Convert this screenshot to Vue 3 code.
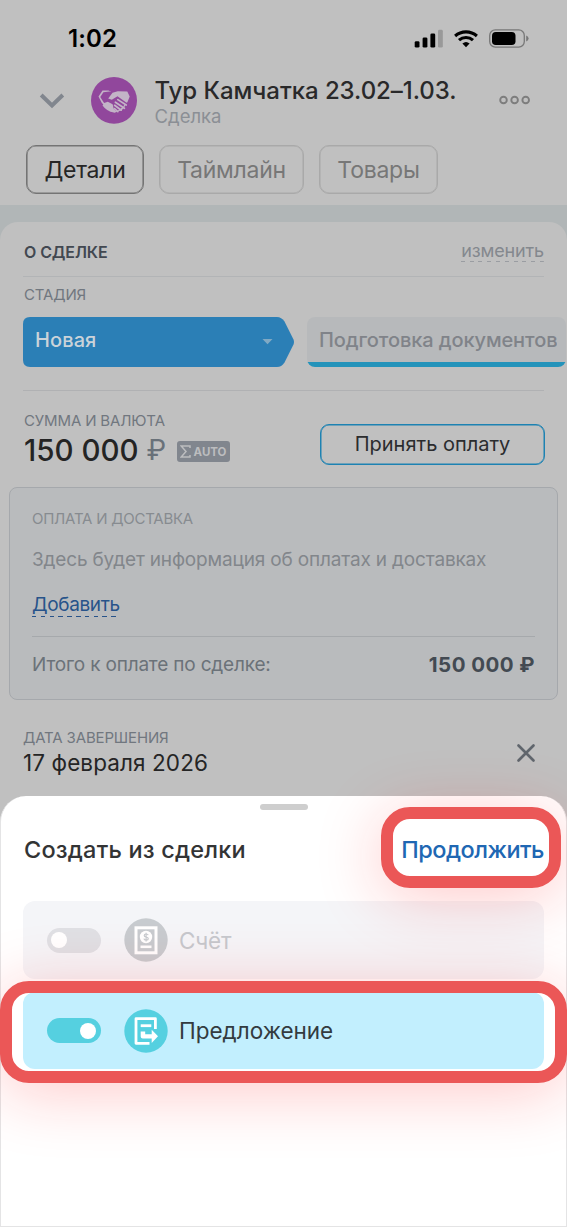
<script setup>
const tabs = [
  { label: 'Детали', cls: 'tab-details active' },
  { label: 'Таймлайн', cls: 'tab-timeline' },
  { label: 'Товары', cls: 'tab-products' },
]
</script>

<template>
  <div class="screen">
    <header class="top">
      <div class="status">
        <span class="clock">1:02</span>
        <svg class="status-icons" width="116" height="22" viewBox="0 0 116 22">
          <rect x="0.7" y="13.2" width="4.8" height="6.4" rx="1.4" />
          <rect x="8.6" y="9.4" width="4.8" height="10.2" rx="1.4" />
          <rect x="16.4" y="5.4" width="4.8" height="14.2" rx="1.4" />
          <rect x="24" y="1.8" width="4.8" height="17.8" rx="1.4" fill="#999" />
          <g fill="none" stroke="#000" stroke-width="3.1">
            <path d="M41.1 8A16.5 16.5 0 0 1 62.9 8" />
            <path d="M45 12.2A10.5 10.5 0 0 1 59 12.2" />
          </g>
          <path d="M48.4 15.6A5.5 5.5 0 0 1 55.6 15.6L52 19.2Z" />
          <rect x="75.7" y="1.8" width="34.6" height="17.4" rx="5.6" fill="none" stroke="#777" stroke-width="1.3" />
          <rect x="78" y="4" width="23.5" height="13" rx="3.8" />
          <path d="M112.2 7.6Q114.6 8.6 114.6 10.5T112.2 13.4Z" fill="#777" />
        </svg>
      </div>
      <div class="deal-head">
        <svg class="chevron" width="26" height="18" viewBox="0 0 26 18"><path d="M2.2 3L13 13.4L23.8 3" fill="none" stroke="#81868e" stroke-width="4" /></svg>
        <svg class="avatar" width="46" height="47" viewBox="0 0 46 47">
          <ellipse cx="23" cy="23.4" rx="23" ry="23.4" fill="#91479c" />
          <path d="M7.5 19.5L11.5 13.5L17.5 13.4L20 14.8L15 22L17.5 24.7L23.4 20.4L34.4 28.6L31 33L23.5 35.8L19 34.6L10.7 25.8Z" fill="#c3b4c7" />
          <path d="M12.4 15.2L9.3 20L13.1 26L16.8 24.8L21.6 27.2L22.8 32L25.5 34.5L32.5 29.5L34.5 24.8L27 16L18.5 14.5Z" fill="#91479c" />
          <path d="M17.2 21.6L21.5 15.8L26.8 14.2L36.3 14.5L38.7 19.6L36.4 25.2L35.5 25.8L26.5 19.2L20.8 22.8Z" fill="#c3b4c7" />
          <path d="M11.5 28.5Q13 25 17 26.4L20.5 28.2Q22.5 30 21.3 34.6Q16 34.5 11.5 28.5Z" fill="#c3b4c7" />
          <path d="M24.4 25.2L33.4 31.3M23.6 28.3L30.2 33.2M23.5 31.6L26.8 34.6M26.8 22.6L35.2 28" stroke="#c3b4c7" stroke-width="1.7" stroke-linecap="round" />
        </svg>
        <div class="deal-names">
          <div class="deal-title">Тур Камчатка 23.02–1.03.</div>
          <div class="deal-kind">Сделка</div>
        </div>
        <svg class="more" width="32" height="10" viewBox="0 0 32 10"><g fill="none" stroke="#7d7d7d" stroke-width="1.9"><circle cx="4.5" cy="5" r="3.3" /><circle cx="15.600" cy="5" r="3.3" /><circle cx="26.700" cy="5" r="3.3" /></g></svg>
      </div>
      <nav class="tabs">
        <div v-for="t in tabs" :key="t.label" class="tab" :class="t.cls">{{ t.label }}</div>
      </nav>
    </header>

    <main class="card">
      <div class="section-head">
        <span class="section-title">О СДЕЛКЕ</span>
        <span class="edit">изменить</span>
      </div>
      <div class="stage-block">
        <div class="label stage-label">СТАДИЯ</div>
        <div class="stages">
          <div class="stage-now">
            <svg width="272" height="50" viewBox="0 0 272 50"><path d="M7 0H254Q258.500 0 261.500 4.500L270.500 22.500Q271.500 25 270.500 27.500L261.500 45.500Q258.500 50 254 50H7Q0 50 0 43V7Q0 0 7 0Z" fill="#2b7fb6" /><path d="M239.500 22H249.500L244.500 27.200Z" fill="#80a9c4" /></svg>
            <span>Новая</span>
          </div>
          <div class="stage-next"><span>Подготовка документов</span></div>
        </div>
      </div>
      <div class="sum-row">
        <div>
          <div class="label sum-label">СУММА И ВАЛЮТА</div>
          <div class="sum">
            <span class="amount">150 000</span><span class="rub">₽</span>
            <span class="auto"><svg width="11" height="13" viewBox="0 0 11 13"><path d="M10 3V1H1.200L6 6.500L1.200 12H10V10" fill="none" stroke="#bcbdbf" stroke-width="1.500" /></svg>AUTO</span>
          </div>
        </div>
        <div class="pay">Принять оплату</div>
      </div>
      <section class="delivery">
        <div class="delivery-label">ОПЛАТА И ДОСТАВКА</div>
        <div class="delivery-text">Здесь будет информация об оплатах и доставках</div>
        <div class="add">Добавить</div>
        <div class="total"><span>Итого к оплате по сделке:</span><b>150 000 ₽</b></div>
      </section>
      <div class="date-row">
        <div>
          <div class="label date-label">ДАТА ЗАВЕРШЕНИЯ</div>
          <div class="date">17 февраля 2026</div>
        </div>
        <svg class="close" width="20" height="20" viewBox="0 0 20 20"><path d="M2.500 2.500L17.500 17.500M17.500 2.500L2.500 17.500" stroke="#60666d" stroke-width="2.700" stroke-linecap="round" /></svg>
      </div>
    </main>

    <section class="sheet">
      <div class="handle"></div>
      <div class="sheet-head">
        <span class="sheet-title">Создать из сделки</span>
        <span class="continue">Продолжить</span>
      </div>
      <div class="option off">
        <span class="switch"><i></i></span>
        <svg class="opt-icon" width="44" height="44" viewBox="0 0 44 44">
          <circle cx="22" cy="22" r="21.700" fill="#c7cbcf" />
          <rect x="12" y="9.800" width="20" height="25" fill="none" stroke="#fff" stroke-width="3" />
          <circle cx="22" cy="19" r="6.200" fill="#fff" />
          <path d="M24.200 17.200Q23.900 16 22.100 16Q20.200 16 20.200 17.400Q20.200 18.600 22.100 19Q24.300 19.400 24.300 20.800Q24.300 22.100 22.200 22.100Q20.200 22.100 19.900 20.700M22.100 14.700V23.400" fill="none" stroke="#c7cbcf" stroke-width="1.200" />
          <path d="M16.500 28.800H27.500" stroke="#fff" stroke-width="2.600" />
        </svg>
        <span class="opt-name">Счёт</span>
      </div>
      <div class="option on">
        <span class="switch"><i></i></span>
        <svg class="opt-icon" width="44" height="44" viewBox="0 0 44 44">
          <circle cx="22" cy="22" r="21.700" fill="#55d0e0" />
          <path d="M31.400 20V9.700H12V34.300H25.500" fill="none" stroke="#fff" stroke-width="2.800" stroke-linejoin="round" />
          <path d="M16.700 16.700H27.300" stroke="#fff" stroke-width="2.800" />
          <path d="M16.700 22.500H21.200V25.200H27.700V20.800L34 27.300L27.700 34V29.400H18.700Q16.700 29.400 16.700 27.400Z" fill="#fff" />
        </svg>
        <span class="opt-name">Предложение</span>
      </div>
    </section>

    <div class="mark mark-continue"></div>
    <div class="mark mark-offer"></div>
  </div>
</template>

<style>
body { margin: 0; }
</style>

<style scoped>
* { box-sizing: border-box; }
.screen { position: relative; width: 567px; height: 1227px; overflow: hidden; background: #b1b6b7; font-family: Inter, "Liberation Sans", sans-serif; white-space: nowrap; }
.top { height: 205px; background: #c0c0c0; }
.status { display: flex; justify-content: space-between; align-items: center; height: 76px; padding: 1px 36px 0 68px; }
.clock { font-size: 24px; font-weight: 600; line-height: 30px; letter-spacing: 0.1px; color: #000; }
.status-icons { margin-right: 1px; }
.deal-head { display: flex; align-items: flex-start; height: 69px; padding: 0 36px 0 39px; }
.chevron { margin-top: 16px; }
.avatar { margin: 1px 0 0 26px; flex: none; }
.deal-names { flex: 1; padding-left: 17.500px; }
.deal-title { font-size: 24px; line-height: 30px; font-weight: 500; color: #29292a; letter-spacing: -0.05px; }
.deal-kind { font-size: 18.500px; line-height: 20px; color: #8b8f95; }
.more { margin-top: 19px; }
.tabs { display: flex; gap: 15px; padding-left: 26px; }
.tab { height: 49px; line-height: 48px; border: 1px solid #a9a9a9; box-shadow: inset 0 0 0 .5px #a9a9a9; border-radius: 10px; font-size: 23px; text-align: center; color: #777; letter-spacing: -0.25px; }
.tab.active { border-color: #747474; box-shadow: inset 0 0 0 .6px #747474; color: #262626; }
.tab-details { width: 118px; }
.tab-timeline { width: 145px; }
.tab-products { width: 119px; }

.card { height: 640px; margin-top: 17px; padding: 0 9px; background: #c0c0c0; border-radius: 18px 18px 0 0; }
.section-head { display: flex; justify-content: space-between; align-items: flex-start; height: 55px; margin: 0 14px; padding: 18px 0 0 1px; border-bottom: 1px solid #b2b4b6; }
.section-title { font-size: 16px; line-height: 24px; font-weight: 600; color: #424851; letter-spacing: -.1px; }
.edit { font-size: 18px; line-height: 21px; color: #84888e; letter-spacing: -.15px; padding-bottom: 1px; background: repeating-linear-gradient(90deg, #9a9da2 0 4px, transparent 4px 8.800px) bottom / 100% 1px no-repeat; }
.label { font-size: 15px; line-height: 18px; color: #71777f; letter-spacing: -.15px; }
.stage-block { height: 114px; margin: 0 14px; padding-top: 9px; border-bottom: 1px solid #b0b1b3; }
.stage-label { padding-left: 1px; }
.stages { display: flex; gap: 12px; margin-top: 13px; width: 544px; }
.stage-now { position: relative; width: 272px; height: 50px; font-size: 20px; font-weight: 500; color: #cad3d9; flex: none; }
.stage-now svg { display: block; }
.stage-now span { position: absolute; left: 12px; top: 10px; line-height: 26px; letter-spacing: .1px; }
.stage-next { width: 259px; height: 50px; flex: none; padding: 10px 9px 0 12px; border-radius: 8px; background: linear-gradient(#b7b9bb 45px, #2493ba 45px); font-size: 20px; font-weight: 500; line-height: 26px; color: #808389; }
.stage-next span { display: block; overflow: hidden; letter-spacing: -.1px; }
.sum-row { display: flex; justify-content: space-between; height: 96px; padding: 21px 13px 0 15px; }
.sum { display: flex; align-items: center; height: 40px; }
.amount { font-size: 29.500px; font-weight: 500; color: #242424; }
.rub { width: 18px; margin-left: 8px; font-size: 28px; color: #697179; }
.auto { display: flex; align-items: center; justify-content: center; gap: 3px; width: 53px; height: 21px; margin: 3px 0 0 12px; border-radius: 3px; background: #81868e; color: #bcbdbf; font-size: 11.500px; font-weight: 700; }
.pay { width: 225px; height: 41px; margin-top: 12px; line-height: 39px; border: 1px solid #1d82b2; box-shadow: inset 0 0 0 .5px #1d82b2; border-radius: 9px; text-align: center; font-size: 20px; color: #2b2c2e; letter-spacing: 0; }
.delivery { height: 213px; padding: 22px 22px 0; border: 1.500px solid #a5a8ac; border-radius: 8px; background: #b9bbbd; }
.delivery-label { font-size: 15px; line-height: 18px; color: #878b90; letter-spacing: -.25px; }
.delivery-text { margin-top: 19px; font-size: 19px; line-height: 26px; color: #82868b; letter-spacing: -.17px; }
.add { width: 88px; margin-top: 20px; font-size: 19px; line-height: 23px; height: 24px; color: #27538a; letter-spacing: -.35px; background: repeating-linear-gradient(90deg, #27538a 0 4.500px, transparent 4.500px 8.800px) bottom / 100% 1.500px no-repeat; }
.total { display: flex; justify-content: space-between; margin-top: 19px; padding-top: 15px; border-top: 1px solid #a6a9ac; font-size: 19px; line-height: 25px; color: #6b7279; letter-spacing: -.18px; }
.total b { font-size: 20.500px; color: #434a52; font-weight: 700; letter-spacing: .45px; }
.date-row { display: flex; justify-content: space-between; padding: 29px 22px 0 14px; }
.date { font-size: 22.500px; line-height: 32px; color: #252525; letter-spacing: .1px; }
.close { margin-top: 14px; }

.sheet { position: absolute; left: 0; top: 796px; width: 567px; height: 431px; padding: 8px 22px 0 22px; border: solid #e4e4e5; border-width: 0 1px 1px 1px; border-radius: 26px 26px 0 0; background: #fff; }
.handle { width: 48px; height: 5.500px; margin: 0 auto; border-radius: 3px; background: #cecece; }
.sheet-head { display: flex; justify-content: space-between; height: 91.500px; padding: 24px 0 0; font-size: 23.500px; font-weight: 500; line-height: 32px; }
.sheet-title { color: #333435; padding-left: 1px; letter-spacing: .2px; }
.continue { color: #2067b3; letter-spacing: -.5px; }
.option { display: flex; align-items: center; width: 521px; height: 78px; margin-bottom: 13px; padding-left: 23.500px; border-radius: 12px; }
.option.off { background: #f4f5f8; }
.option.on { background: #c2effe; height: 77px; }
.switch { width: 54px; height: 25px; border-radius: 13px; background: #dfe0e4; padding: 4.500px; }
.switch i { display: block; width: 16px; height: 16px; border-radius: 50%; background: #fff; }
.on .switch { background: #55d0e0; }
.on .switch i { margin-left: auto; }
.opt-icon { margin-left: 23px; }
.opt-name { margin-left: 11.500px; font-size: 22.500px; color: #c5c8cd; }
.off .opt-name { letter-spacing: -.2px; }
.on .opt-name { color: #333b40; }

.mark { position: absolute; border: 12px solid #eb5757; border-radius: 29px; box-shadow: 0 9px 66px rgba(255, 20, 20, .23); }
.mark-continue { left: 381px; top: 807px; width: 180px; height: 81px; }
.mark-offer { left: 0; top: 981px; width: 567px; height: 102px; }
</style>
